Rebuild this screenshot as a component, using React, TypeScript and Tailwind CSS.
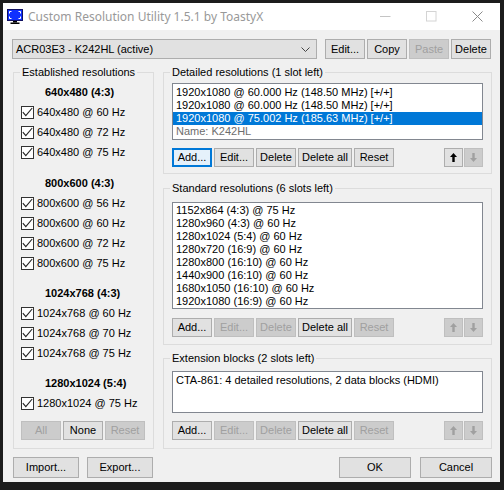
import React from "react";

type BtnProps = {
  label?: string;
  w: string;
  h?: string;
  disabled?: boolean;
  focused?: boolean;
  children?: React.ReactNode;
};

function Btn({ label, w, h = "h-[19px]", disabled, focused, children }: BtnProps) {
  const base = "flex shrink-0 items-center justify-center whitespace-nowrap border leading-none";
  const state = disabled
    ? "bg-[#cccccc] border-[#bfbfbf] text-[#a0a0a0]"
    : focused
    ? "bg-[#e5f1fb] border-[#0078d7] shadow-[inset_0_0_0_1px_#0078d7] text-black"
    : "bg-[#e1e1e1] border-[#adadad] text-black";
  return <div className={`${base} ${state} ${w} ${h}`}>{children ?? label}</div>;
}

function Arrow({ up, color }: { up: boolean; color: string }) {
  return (
    <svg width="7" height="9" viewBox="0 0 7 9">
      <path
        d={up ? "M3.5 0 L7 4 L4.7 4 L4.7 9 L2.3 9 L2.3 4 L0 4 Z" : "M3.5 9 L7 5 L4.7 5 L4.7 0 L2.3 0 L2.3 5 L0 5 Z"}
        fill={color}
      />
    </svg>
  );
}

function Check({ label }: { label: string }) {
  return (
    <div className="flex h-[20px] items-center gap-[3px] whitespace-nowrap">
      <span className="flex h-[13px] w-[13px] shrink-0 items-center justify-center border border-[#333333] bg-white">
        <svg width="11" height="11" viewBox="0 0 11 11">
          <path d="M0.8 5.2 L3.8 8.6 L10.2 1" stroke="#222222" strokeWidth="1.1" fill="none" />
        </svg>
      </span>
      <span className="leading-none">{label}</span>
    </div>
  );
}

function Header({ label }: { label: string }) {
  return <div className="flex h-[20px] items-center whitespace-nowrap pl-[24px] font-bold leading-none">{label}</div>;
}

function GroupLabel({ label }: { label: string }) {
  return (
    <span className="absolute -top-[9px] left-[6px] whitespace-nowrap bg-[#f0f0f0] px-[2px] leading-[16px]">{label}</span>
  );
}

function ActionRow({ editDisabled, addFocused, upEnabled }: { editDisabled: boolean; addFocused?: boolean; upEnabled?: boolean }) {
  return (
    <div className="flex gap-[2px]">
      <Btn w="w-[40px]" label="Add..." focused={addFocused} />
      <Btn w="w-[40px]" label="Edit..." disabled={editDisabled} />
      <Btn w="w-[40px]" label="Delete" disabled={editDisabled} />
      <Btn w="w-[54px]" label="Delete all" />
      <Btn w="w-[40px]" label="Reset" disabled={editDisabled} />
      <div className="ml-auto flex gap-[1px]">
        <Btn w="w-[19px]" disabled={!upEnabled}>
          <Arrow up color={upEnabled ? "#000000" : "#a0a0a0"} />
        </Btn>
        <Btn w="w-[19px]" disabled>
          <Arrow up={false} color="#a0a0a0" />
        </Btn>
      </div>
    </div>
  );
}

export default function App() {
  const standard = [
    "1152x864 (4:3) @ 75 Hz",
    "1280x960 (4:3) @ 60 Hz",
    "1280x1024 (5:4) @ 60 Hz",
    "1280x720 (16:9) @ 60 Hz",
    "1280x800 (16:10) @ 60 Hz",
    "1440x900 (16:10) @ 60 Hz",
    "1680x1050 (16:10) @ 60 Hz",
    "1920x1080 (16:9) @ 60 Hz",
  ];
  return (
    <div className="h-[490px] w-[504px] overflow-hidden bg-[#1c1c1c] pl-[3px] pt-[3px]">
      <div className="flex h-[479px] w-[497px] flex-col bg-[#f0f0f0] font-['Liberation_Sans',Arial,sans-serif] text-[11px] text-black">
        {/* Title bar */}
        <div className="flex h-[27px] shrink-0 items-center bg-white">
          <svg className="ml-[4px] shrink-0" width="16" height="15" viewBox="0 0 16 15">
            <rect x="0" y="0" width="16" height="12" fill="#101060" />
            <rect x="1" y="1" width="14" height="10" fill="#1030ff" />
            <path d="M2.5 4.5 V2.5 H4.5 M11.5 2.5 H13.5 V4.5 M13.5 7.5 V9.5 H11.5 M4.5 9.5 H2.5 V7.5" stroke="#ffffff" strokeWidth="1" fill="none" />
            <rect x="6" y="12" width="4" height="1.5" fill="#000000" />
            <rect x="3.5" y="13.5" width="9" height="1.5" fill="#000000" />
          </svg>
          <span className="ml-[5px] font-['Noto_Sans',sans-serif] text-[12px] text-[#999999]">Custom Resolution Utility 1.5.1 by ToastyX</span>
          <div className="ml-auto flex h-full">
            <div className="flex h-full w-[46px] items-center justify-center">
              <svg width="11" height="11" viewBox="0 0 11 11">
                <path d="M0 5.5 H10.5" stroke="#c4c4c4" strokeWidth="1" />
              </svg>
            </div>
            <div className="flex h-full w-[46px] items-center justify-center">
              <svg width="11" height="11" viewBox="0 0 11 11">
                <rect x="0.5" y="0.5" width="9.5" height="9.5" stroke="#d4d4d4" strokeWidth="1" fill="none" />
              </svg>
            </div>
            <div className="flex h-full w-[46px] items-center justify-center">
              <svg width="11" height="11" viewBox="0 0 11 11">
                <path d="M0.5 0.5 L10.5 10.5 M10.5 0.5 L0.5 10.5" stroke="#8a8a8a" strokeWidth="1" />
              </svg>
            </div>
          </div>
        </div>

        {/* Top row */}
        <div className="mt-[9px] flex gap-[2px] px-[9px]">
          <div className="mr-[6px] flex h-[20px] w-[306px] items-center border border-[#adadad] bg-[#e1e1e1] pl-[3px] pr-[6px]">
            <span className="whitespace-nowrap leading-none">ACR03E3 - K242HL (active)</span>
            <svg className="ml-auto" width="9" height="5" viewBox="0 0 9 5">
              <path d="M0.5 0.5 L4.5 4.5 L8.5 0.5" stroke="#444444" strokeWidth="1" fill="none" />
            </svg>
          </div>
          <Btn w="w-[40px]" h="h-[20px]" label="Edit..." />
          <Btn w="w-[40px]" h="h-[20px]" label="Copy" />
          <Btn w="w-[40px]" h="h-[20px]" label="Paste" disabled />
          <Btn w="w-[40px]" h="h-[20px]" label="Delete" />
        </div>

        {/* Main */}
        <div className="mt-[13px] flex gap-[9px] pl-[10px] pr-[8px]">
          {/* Established */}
          <div className="relative flex h-[377px] w-[141px] shrink-0 flex-col border border-[#dcdcdc] px-[7px] pt-[9px]">
            <GroupLabel label="Established resolutions" />
            <Header label="640x480 (4:3)" />
            <Check label="640x480 @ 60 Hz" />
            <Check label="640x480 @ 72 Hz" />
            <Check label="640x480 @ 75 Hz" />
            <div className="mt-[11px]">
              <Header label="800x600 (4:3)" />
              <Check label="800x600 @ 56 Hz" />
              <Check label="800x600 @ 60 Hz" />
              <Check label="800x600 @ 72 Hz" />
              <Check label="800x600 @ 75 Hz" />
            </div>
            <div className="mt-[10px]">
              <Header label="1024x768 (4:3)" />
              <Check label="1024x768 @ 60 Hz" />
              <Check label="1024x768 @ 70 Hz" />
              <Check label="1024x768 @ 75 Hz" />
            </div>
            <div className="mt-[10px]">
              <Header label="1280x1024 (5:4)" />
              <Check label="1280x1024 @ 75 Hz" />
            </div>
            <div className="mt-[8px] flex gap-[2px]">
              <Btn w="w-[40px]" label="All" disabled />
              <Btn w="w-[40px]" label="None" />
              <Btn w="w-[40px]" label="Reset" disabled />
            </div>
          </div>

          {/* Right column */}
          <div className="flex flex-1 flex-col">
            <div className="relative h-[102px] border border-[#dcdcdc] px-[8px] pt-[10px]">
              <GroupLabel label="Detailed resolutions (1 slot left)" />
              <div className="h-[57px] whitespace-nowrap border border-[#828790] bg-white pt-[2px] leading-[13px]">
                <div className="pl-[3px]">1920x1080 @ 60.000 Hz (148.50 MHz) [+/+]</div>
                <div className="pl-[3px]">1920x1080 @ 60.000 Hz (148.50 MHz) [+/+]</div>
                <div className="bg-[#0078d7] pl-[3px] text-white">1920x1080 @ 75.002 Hz (185.63 MHz) [+/+]</div>
                <div className="pl-[3px] text-[#6d6d6d]">Name: K242HL</div>
              </div>
              <div className="mt-[8px]">
                <ActionRow editDisabled={false} addFocused upEnabled />
              </div>
            </div>

            <div className="relative mt-[14px] h-[157px] border border-[#dcdcdc] px-[8px] pt-[13px]">
              <GroupLabel label="Standard resolutions (6 slots left)" />
              <div className="h-[107px] whitespace-nowrap border border-[#828790] bg-white pt-[1px] leading-[13px]">
                {standard.map((s) => (
                  <div key={s} className="pl-[3px]">
                    {s}
                  </div>
                ))}
              </div>
              <div className="mt-[9px]">
                <ActionRow editDisabled />
              </div>
            </div>

            <div className="relative mt-[13px] h-[91px] border border-[#dcdcdc] px-[8px] pt-[12px]">
              <GroupLabel label="Extension blocks (2 slots left)" />
              <div className="h-[42px] whitespace-nowrap border border-[#828790] bg-white pt-[2px] leading-[13px]">
                <div className="pl-[3px]">CTA-861: 4 detailed resolutions, 2 data blocks (HDMI)</div>
              </div>
              <div className="mt-[8px]">
                <ActionRow editDisabled />
              </div>
            </div>
          </div>
        </div>

        {/* Bottom row */}
        <div className="mt-[8px] flex pl-[10px] pr-[8px]">
          <Btn w="w-[66px]" h="h-[21px]" label="Import..." />
          <div className="ml-[8px]">
            <Btn w="w-[66px]" h="h-[21px]" label="Export..." />
          </div>
          <div className="ml-auto flex gap-[9px]">
            <Btn w="w-[72px]" h="h-[21px]" label="OK" />
            <Btn w="w-[72px]" h="h-[21px]" label="Cancel" />
          </div>
        </div>
      </div>
    </div>
  );
}
